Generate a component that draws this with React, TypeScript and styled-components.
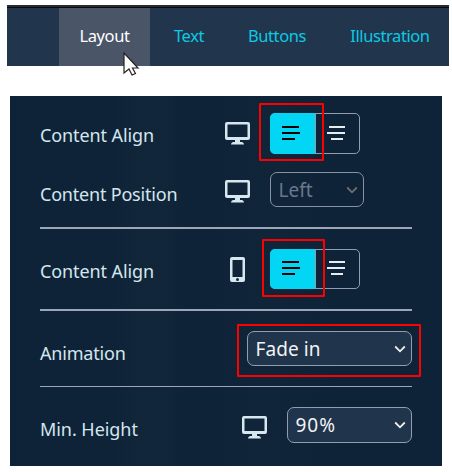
import React from "react";
import styled, { createGlobalStyle } from "styled-components";

const Global = createGlobalStyle`
  * { box-sizing: border-box; }
  body { margin: 0; background: #fff; }
`;

const Page = styled.div`
  position: relative;
  width: 452px;
  height: 472px;
  padding: 5px 3px 0 7px;
  overflow: hidden;
  font-family: "Noto Sans", "Open Sans", sans-serif;
`;

const TabBar = styled.nav`
  display: flex;
  height: 61px;
  padding-left: 52px;
  border-top: 2px solid #292a2e;
  background: #21364c;
  box-shadow: inset 0 1px #070a0e;
`;

const Tab = styled.button<{ $width: number; $spacing: number; $active?: boolean }>`
  flex: none;
  width: ${(p) => p.$width}px;
  margin-top: 1px;
  padding: 0 0 3px;
  border: 0;
  background: ${(p) => (p.$active ? "#4b5568" : "transparent")};
  color: ${(p) => (p.$active ? "#fff" : "#0cc9e6")};
  font: 400 16.5px "Noto Sans", sans-serif;
  letter-spacing: ${(p) => p.$spacing}px;
  white-space: nowrap;
`;

const Panel = styled.main`
  width: 432px;
  height: 370px;
  margin: 30px 0 0 3px;
  padding: 0 30px;
  background:
    linear-gradient(90deg, transparent 105px, #1b304130 125px 155px, transparent 175px),
    linear-gradient(90deg, transparent 200px, #182d3e30 250px, transparent 330px),
    #0e2337;
`;

const Row = styled.div<{ $height: number }>`
  display: flex;
  align-items: center;
  height: ${(p) => p.$height}px;
`;

const Label = styled.span<{ $drop: number; $spacing: number }>`
  flex: 1;
  padding-top: ${(p) => p.$drop}px;
  color: #d5e6ee;
  font-size: 18px;
  line-height: 24px;
  letter-spacing: ${(p) => p.$spacing}px;
  white-space: nowrap;
`;

const DeviceIcon = styled.svg<{ $gap: number; $drop?: number }>`
  flex: none;
  width: 25px;
  height: 25px;
  margin-right: ${(p) => p.$gap}px;
  margin-top: ${(p) => p.$drop ?? 0}px;
`;

const ControlSlot = styled.div<{ $width: number }>`
  position: relative;
  flex: none;
  width: ${(p) => p.$width}px;
`;

const Segments = styled.div<{ $height: number }>`
  display: flex;
  width: 90px;
  height: ${(p) => p.$height}px;
  border: 1px solid #919caf;
  border-radius: 5px;
`;

const Segment = styled.button<{ $on?: boolean }>`
  display: flex;
  align-items: flex-start;
  flex: none;
  width: ${(p) => (p.$on ? 46 : 43)}px;
  margin: ${(p) => (p.$on ? "-1px 0 -1px -1px" : "0")};
  padding: 0;
  border: 0;
  border-right: ${(p) => (p.$on ? "1px solid #919caf" : "0")};
  border-radius: ${(p) => (p.$on ? "5px 0 0 5px" : "0")};
  background: ${(p) => (p.$on ? "#03d5f5" : "transparent")};
  color: ${(p) => (p.$on ? "#000" : "#e5edf2")};
`;

const Lines = styled.svg<{ $top: number }>`
  flex: none;
  width: 43px;
  height: 14px;
  margin-top: ${(p) => p.$top}px;
`;

const Select = styled.div<{ $height: number; $disabled?: boolean; $spacing?: number }>`
  display: flex;
  align-items: center;
  justify-content: space-between;
  height: ${(p) => p.$height}px;
  padding: 0 5px 0 7.5px;
  border: 1px solid ${(p) => (p.$disabled ? "#8792a3" : "#929eb0")};
  border-radius: 7px;
  background: ${(p) => (p.$disabled ? "transparent" : "#20344b")};
  color: ${(p) => (p.$disabled ? "#6b788b" : "#f2f3f4")};
  font-size: 19px;
  line-height: 26px;
  letter-spacing: ${(p) => p.$spacing ?? 0}px;
`;

const Highlight = styled.div<{ $x: number; $y: number; $w: number; $h: number }>`
  position: absolute;
  left: ${(p) => p.$x}px;
  top: ${(p) => p.$y}px;
  width: ${(p) => p.$w}px;
  height: ${(p) => p.$h}px;
  border: 2px solid #fd0000;
  border-radius: 1px;
  pointer-events: none;
`;

const Divider = styled.hr<{ $height: number }>`
  height: ${(p) => p.$height}px;
  margin: 0;
  border: 0;
  background: #9ca6b7;
`;

const Pointer = styled.svg`
  position: absolute;
  left: 123px;
  top: 52px;
  width: 17px;
  height: 25px;
`;

const Monitor = ({ gap, drop }: { gap: number; drop?: number }) => (
  <DeviceIcon $gap={gap} $drop={drop} viewBox="0 0 25 25">
    <path fill="#d7e7ef" fillRule="evenodd" d="M2 1H23Q25 1 25 3V17Q25 19 23 19H15V21H17Q19 21.500 19 23.500H6Q6 21.500 8 21H10V19H2Q0 19 0 17V3Q0 1 2 1ZM2.500 3.500V16H22.500V3.500Z" />
  </DeviceIcon>
);

const Phone = () => (
  <DeviceIcon $gap={20} viewBox="0 0 25 25">
    <path fill="#d7e7ef" fillRule="evenodd" d="M7 0H18Q20 0 20 2V23Q20 25 18 25H7Q5 25 5 23V2Q5 0 7 0ZM7.500 3V20H17.500V3Z" />
    <circle cx="12.500" cy="22.500" r="1.500" fill="#13283b" />
  </DeviceIcon>
);

const AlignSwitch = ({ height, top }: { height: number; top: number }) => (
  <Segments $height={height}>
    <Segment $on aria-label="Align left">
      <Lines $top={top} viewBox="0 0 43 14"><path fill="currentColor" d="M12 0h17v2H12zM12 6h18v2H12zM12 12h13v2H12z" /></Lines>
    </Segment>
    <Segment aria-label="Align center">
      <Lines $top={top - 1} viewBox="0 0 43 14"><path fill="currentColor" d="M13 0h16v2H13zM11 6h18v2H11zM15 12h12v2H15z" /></Lines>
    </Segment>
  </Segments>
);

const Chevron = ({ muted }: { muted?: boolean }) => (
  <svg width="12" height="10" viewBox="0 0 12 10"><path d="M1.200 2.500L6 7.300L10.800 2.500" fill="none" stroke={muted ? "#706e6e" : "#f0f0ed"} strokeWidth="1.800" /></svg>
);

export default function App() {
  return (
    <Page>
      <Global />
      <TabBar>
        <Tab $active $width={91} $spacing={-0.4}>Layout</Tab>
        <Tab $width={78} $spacing={-0.4}>Text</Tab>
        <Tab $width={98} $spacing={-0.4}>Buttons</Tab>
        <Tab $width={128} $spacing={-0.42}>Illustration</Tab>
      </TabBar>
      <Panel>
        <Row $height={75}>
          <Label $drop={2} $spacing={-0.1}>Content Align</Label>
          <Monitor gap={20} />
          <ControlSlot $width={142}>
            <AlignSwitch height={41} top={13} />
            <Highlight $x={-11} $y={-10} $w={65} $h={58} />
          </ControlSlot>
        </Row>
        <Row $height={37}>
          <Label $drop={8} $spacing={-0.2}>Content Position</Label>
          <Monitor gap={20} drop={4} />
          <ControlSlot $width={142}>
            <ControlSlot $width={94}><Select $height={35} $disabled>Left<Chevron muted /></Select></ControlSlot>
          </ControlSlot>
        </Row>
        <Row $height={19} />
        <Divider $height={2} />
        <Row $height={80}>
          <Label $drop={3} $spacing={-0.1}>Content Align</Label>
          <Phone />
          <ControlSlot $width={142}>
            <AlignSwitch height={40} top={12} />
            <Highlight $x={-8} $y={-10} $w={63} $h={58} />
          </ControlSlot>
        </Row>
        <Divider $height={2} />
        <Row $height={75}>
          <Label $drop={8} $spacing={-0.2}>Animation</Label>
          <ControlSlot $width={165}>
            <Select $height={35} $spacing={0.1}>Fade in<Chevron /></Select>
            <Highlight $x={-10} $y={-7} $w={184} $h={53} />
          </ControlSlot>
        </Row>
        <Divider $height={1} />
        <Row $height={76}>
          <Label $drop={7} $spacing={-0.05}>Min. Height</Label>
          <Monitor gap={20} drop={5} />
          <ControlSlot $width={125}><Select $height={36} $spacing={1}>90%<Chevron /></Select></ControlSlot>
        </Row>
      </Panel>
      <Pointer viewBox="0 0 17 25">
        <path d="M1 1V21L6 17L9 23L12.500 21.500L9.500 16H15Z" fill="#fff" stroke="#262421" strokeWidth="1.200" />
      </Pointer>
    </Page>
  );
}
